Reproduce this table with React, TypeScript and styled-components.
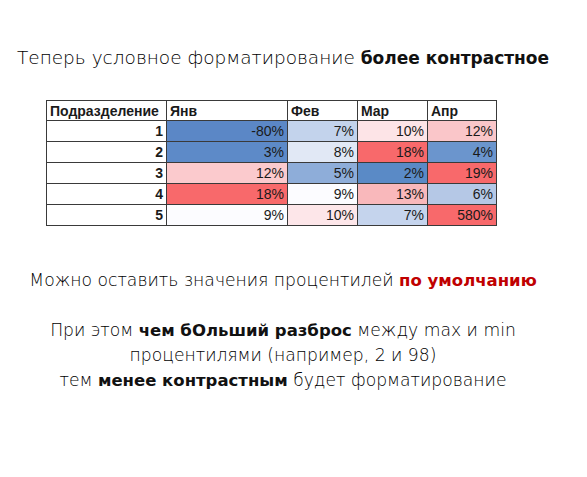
import React from "react";
import styled, { createGlobalStyle } from "styled-components";

const GlobalStyle = createGlobalStyle`
  html, body {
    margin: 0;
    padding: 0;
    background: #ffffff;
  }
`;

type Cell = { v: string; bg: string };

const rows: { id: number; cells: Cell[] }[] = [
  {
    id: 1,
    cells: [
      { v: "-80%", bg: "#5b87c6" },
      { v: "7%", bg: "#c3d3ec" },
      { v: "10%", bg: "#fde4e7" },
      { v: "12%", bg: "#fac6c9" },
    ],
  },
  {
    id: 2,
    cells: [
      { v: "3%", bg: "#5d8ac8" },
      { v: "8%", bg: "#e1e8f5" },
      { v: "18%", bg: "#f8696b" },
      { v: "4%", bg: "#6b95cd" },
    ],
  },
  {
    id: 3,
    cells: [
      { v: "12%", bg: "#fbcacd" },
      { v: "5%", bg: "#8eadd9" },
      { v: "2%", bg: "#5a8ac6" },
      { v: "19%", bg: "#f8696b" },
    ],
  },
  {
    id: 4,
    cells: [
      { v: "18%", bg: "#f8696b" },
      { v: "9%", bg: "#fcfcff" },
      { v: "13%", bg: "#f9b8bb" },
      { v: "6%", bg: "#b5c8e6" },
    ],
  },
  {
    id: 5,
    cells: [
      { v: "9%", bg: "#fcfcff" },
      { v: "10%", bg: "#fde6e9" },
      { v: "7%", bg: "#c5d4ed" },
      { v: "580%", bg: "#f8696b" },
    ],
  },
];

const months = ["Янв", "Фев", "Мар", "Апр"];
const widths = [120, 121, 70, 70, 69];

const Page = styled.div`
  box-sizing: border-box;
  width: 587px;
  height: 477px;
  padding-right: 21px;
  display: flex;
  flex-direction: column;
  align-items: center;
  font-family: "DejaVu Sans", sans-serif;
  color: #000;
`;

const Title = styled.p`
  margin: 45px 0 0;
  font-size: 18.5px;
  line-height: 25px;
  font-weight: 200;
  white-space: nowrap;
`;

const Line = styled.p<{ $top?: number }>`
  margin: ${(p) => p.$top ?? 0}px 0 0;
  font-size: 17.2px;
  line-height: 25px;
  text-align: center;
  font-weight: 200;
  white-space: nowrap;
`;

const Strong = styled.b<{ $red?: boolean; $size?: number }>`
  font-size: ${(p) => p.$size ?? 16.5}px;
  font-weight: 700;
  color: ${(p) => (p.$red ? "#c00000" : "#111")};
`;

const Table = styled.table`
  align-self: flex-start;
  margin: 29px 0 0 46px;
  border-collapse: collapse;
  table-layout: fixed;
  font-family: "Liberation Sans", sans-serif;
  font-size: 14px;
  color: #1a1a1a;
`;

const Th = styled.th`
  height: 19px;
  padding: 0 3px;
  border: 1px solid #3a3a3a;
  text-align: left;
  font-weight: 700;
  background: #fff;
`;

const Td = styled.td<{ $bg: string; $bold?: boolean }>`
  height: 20px;
  padding: 0 3px;
  border: 1px solid #3a3a3a;
  text-align: right;
  background: ${(p) => p.$bg};
  font-weight: ${(p) => (p.$bold ? 700 : 400)};
`;

export default function App() {
  return (
    <>
      <GlobalStyle />
      <Page>
        <Title>
          Теперь условное форматирование <Strong $size={17}>более контрастное</Strong>
        </Title>
        <Table>
          <colgroup>
            {widths.map((w, i) => (
              <col key={i} style={{ width: w }} />
            ))}
          </colgroup>
          <thead>
            <tr>
              <Th>Подразделение</Th>
              {months.map((m) => (
                <Th key={m}>{m}</Th>
              ))}
            </tr>
          </thead>
          <tbody>
            {rows.map((r) => (
              <tr key={r.id}>
                <Td $bg="#fff" $bold>
                  {r.id}
                </Td>
                {r.cells.map((c, i) => (
                  <Td key={i} $bg={c.bg}>
                    {c.v}
                  </Td>
                ))}
              </tr>
            ))}
          </tbody>
        </Table>
        <Line $top={42}>
          Можно оставить значения процентилей <Strong $red>по умолчанию</Strong>
        </Line>
        <Line $top={25}>
          При этом <Strong>чем бОльший разброс</Strong> между max и min
        </Line>
        <Line>процентилями (например, 2 и 98)</Line>
        <Line>
          тем <Strong>менее контрастным</Strong> будет форматирование
        </Line>
      </Page>
    </>
  );
}
